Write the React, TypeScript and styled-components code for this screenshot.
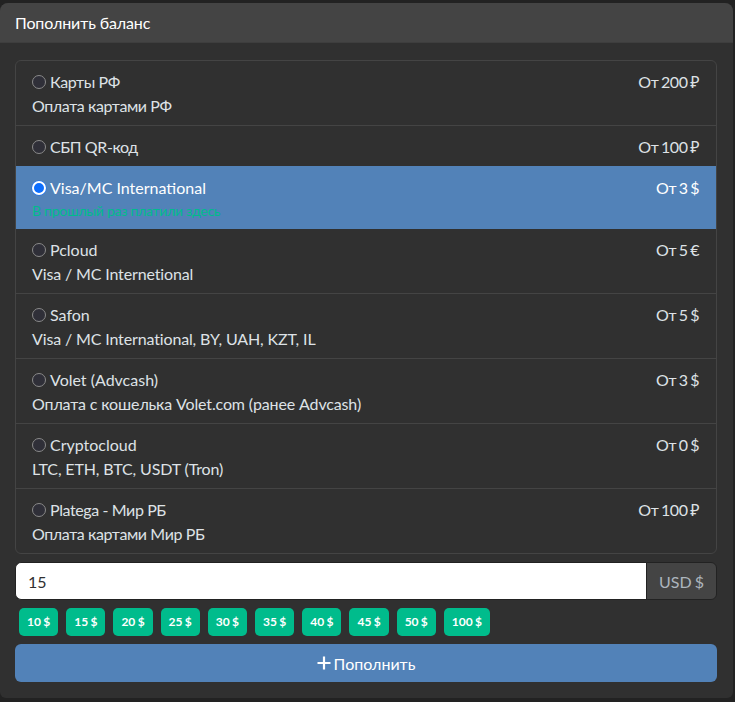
import { createGlobalStyle, styled } from 'styled-components';

interface Method {
  name: string;
  min: string;
  note?: string;
  active?: boolean;
  tight?: boolean;
}

const methods: Method[] = [
  { name: 'Карты РФ', min: 'От 200 ₽', note: 'Оплата картами РФ', tight: true },
  { name: 'СБП QR-код', min: 'От 100 ₽', tight: true },
  { name: 'Visa/MC International', min: 'От 3 $', note: 'В прошлый раз платили здесь', active: true },
  { name: 'Pcloud', min: 'От 5 €', note: 'Visa / MC Internetional' },
  { name: 'Safon', min: 'От 5 $', note: 'Visa / MC International, BY, UAH, KZT, IL' },
  { name: 'Volet (Advcash)', min: 'От 3 $', note: 'Оплата с кошелька Volet.com (ранее Advcash)' },
  { name: 'Cryptocloud', min: 'От 0 $', note: 'LTC, ETH, BTC, USDT (Tron)' },
  { name: 'Platega - Мир РБ', min: 'От 100 ₽', note: 'Оплата картами Мир РБ', tight: true },
];

const amounts = [10, 15, 20, 25, 30, 35, 40, 45, 50, 100];

const GlobalStyle = createGlobalStyle`
  html, body {
    margin: 0;
    background: #222;
  }
  body {
    font-family: Lato, "Noto Sans", sans-serif;
    font-size: 16px;
    line-height: 1.5;
    color: #dee2e6;
  }
  * {
    box-sizing: border-box;
  }
`;

const Modal = styled.div`
  width: 733px;
  height: 695px;
  margin-top: 3px;
  background: #303030;
  border-radius: 8px 8px 6px 6px;
  overflow: hidden;
`;

const Header = styled.div`
  height: 40px;
  padding: 1px 15px 0;
  display: flex;
  align-items: center;
  background: #444;
  border-bottom: 1px solid #3e3e3e;
  color: #fff;
  letter-spacing: -0.12px;
`;

const Body = styled.div`
  padding: 17px 16px 0 15px;
`;

const List = styled.div`
  border: 1px solid #444;
  border-radius: 6px;
  overflow: hidden;
`;

const Item = styled.label<{ $active?: boolean; $divider?: boolean }>`
  display: block;
  padding: ${(p) => (p.$active ? '10px 16px 8px' : '9px 16px 7px')};
  background: ${(p) => (p.$active ? '#5282b8' : 'transparent')};
  color: ${(p) => (p.$active ? '#fff' : '#dee2e6')};
  border-top: ${(p) => (p.$divider ? '1px solid #444' : '0')};
`;

const ItemTop = styled.div`
  display: flex;
  justify-content: space-between;
  align-items: center;
  height: 24px;
  padding-right: 1px;
`;

const ItemName = styled.span<{ $tight?: boolean }>`
  display: flex;
  align-items: center;
  gap: 4px;
  letter-spacing: ${(p) => (p.$tight ? '-0.4px' : '0')};
`;

const Price = styled.span`
  word-spacing: -1px;
  letter-spacing: -0.45px;
`;

const Radio = styled.input`
  appearance: none;
  width: 14px;
  height: 14px;
  margin: 0;
  background: #2f2f38;
  border: 1px solid #8a8a8a;
  border-radius: 50%;
  &:checked {
    background: #0d6efd;
    border: 2px solid #fff;
    box-shadow: 0 0 0 0.5px #0d6efd;
  }
`;

const Note = styled.div<{ $tight?: boolean }>`
  line-height: 24px;
  letter-spacing: ${(p) => (p.$tight ? '-0.4px' : '-0.14px')};
`;

const LastTime = styled.div`
  line-height: 21px;
  font-size: 14px;
  letter-spacing: -0.28px;
  color: #00bc8c;
`;

const InputRow = styled.div`
  display: flex;
  height: 38px;
  margin-top: 8px;
`;

const AmountInput = styled.input`
  flex: 1;
  min-width: 0;
  padding: 0 12px;
  background: #fff;
  border: 1px solid #222;
  border-right: 0;
  border-radius: 6px 0 0 6px;
  font-family: inherit;
  font-size: 16px;
  color: #303030;
  outline: none;
`;

const Currency = styled.span`
  width: 71px;
  padding-top: 1px;
  display: flex;
  align-items: center;
  justify-content: center;
  background: #444;
  border: 1px solid #222;
  border-radius: 0 6px 6px 0;
  color: #adb5bd;
  word-spacing: -1px;
`;

const Amounts = styled.div`
  display: flex;
  gap: 8px;
  margin: 8px 0 8px 4px;
`;

const AmountButton = styled.span`
  height: 28px;
  padding: 0 8px;
  display: flex;
  align-items: center;
  background: #00bc8c;
  border-radius: 5px;
  color: #fff;
  font-size: 12px;
  font-weight: 700;
  word-spacing: -0.6px;
`;

const Submit = styled.button`
  width: 100%;
  height: 38px;
  display: flex;
  align-items: center;
  justify-content: center;
  gap: 3px;
  background: #5282b8;
  border: 0;
  border-radius: 6px;
  color: #fff;
  font-family: inherit;
  font-size: 16px;
`;

function PlusIcon() {
  return (
    <svg width="14" height="14" viewBox="0 0 14 14" fill="none" stroke="#fff" strokeWidth="2.2">
      <path d="M7 0.5v13M0.5 7h13" />
    </svg>
  );
}

export default function App() {
  return (
    <>
      <GlobalStyle />
      <Modal>
        <Header>Пополнить баланс</Header>
        <Body>
          <List>
            {methods.map((m, i) => (
              <Item key={m.name} $active={m.active} $divider={i > 0 && !m.active && !methods[i - 1].active}>
                <ItemTop>
                  <ItemName $tight={m.tight}>
                    <Radio type="radio" name="method" defaultChecked={m.active} />
                    {m.name}
                  </ItemName>
                  <Price>{m.min}</Price>
                </ItemTop>
                {m.note && (m.active ? <LastTime>{m.note}</LastTime> : <Note $tight={m.tight}>{m.note}</Note>)}
              </Item>
            ))}
          </List>
          <InputRow>
            <AmountInput defaultValue="15" />
            <Currency>USD $</Currency>
          </InputRow>
          <Amounts>
            {amounts.map((a) => (
              <AmountButton key={a}>{a} $</AmountButton>
            ))}
          </Amounts>
          <Submit>
            <PlusIcon />
            Пополнить
          </Submit>
        </Body>
      </Modal>
    </>
  );
}
